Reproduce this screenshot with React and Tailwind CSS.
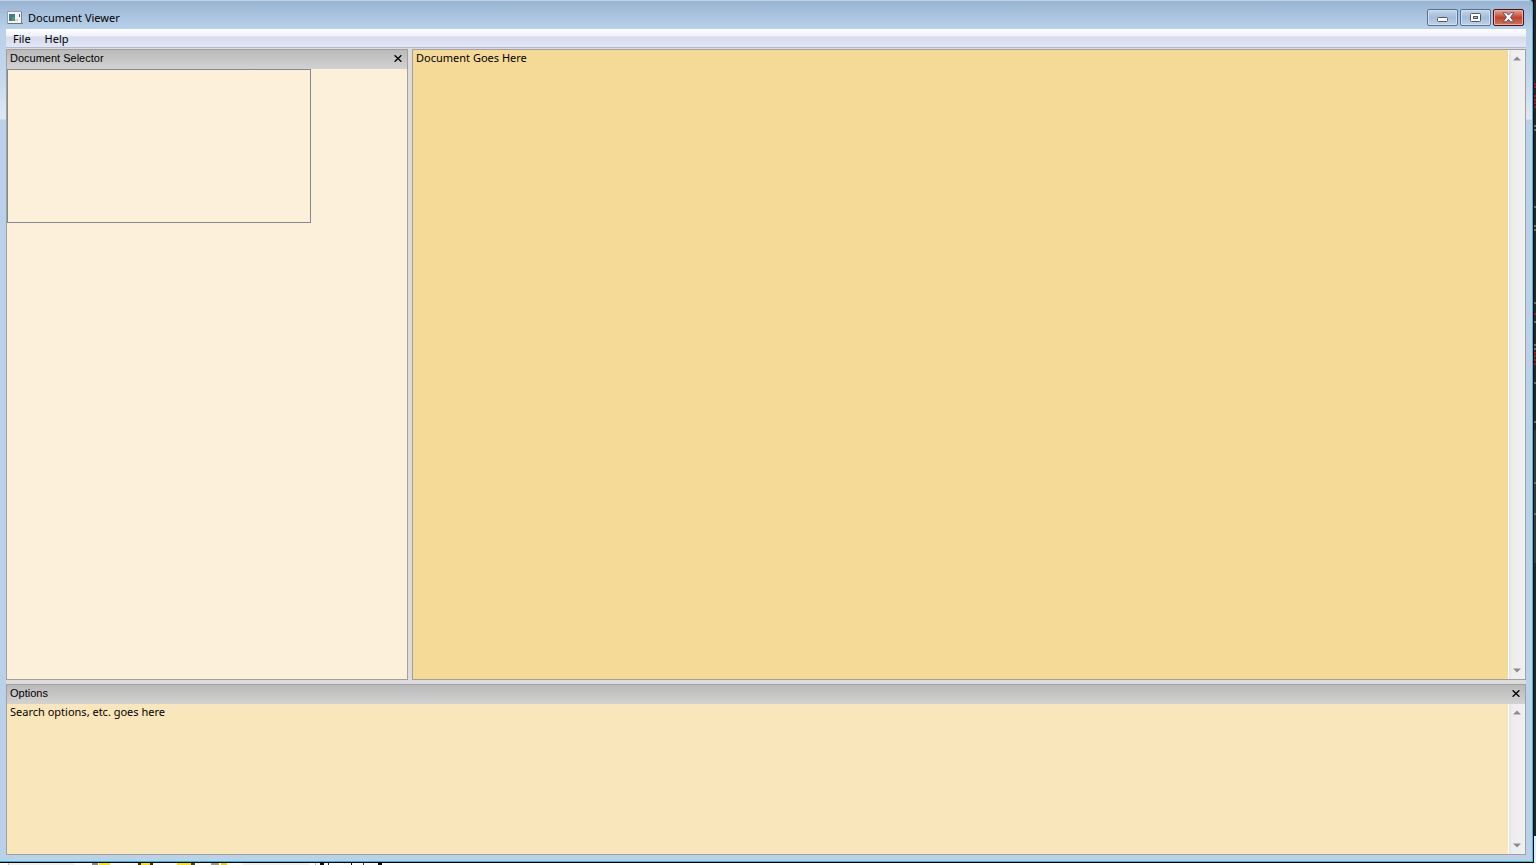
import { useState } from "react";

const uiFont = "font-['Noto_Sans',sans-serif]";
const dockFont = "font-['Liberation_Sans',sans-serif]";

// marks on the dark window behind, right edge
const redMarks = [83, 86, 95, 99, 102, 106, 313, 352, 355, 359, 363];
const tanMarks = [125, 129, 206, 225, 229, 302, 321, 344, 348, 382, 421, 482, 513];

// toolbar icon tops of the window behind, bottom edge
const toolbarBits = [
  { x: 8, w: 1, fill: "#c0c0c0" },
  { x: 9, w: 65, fill: "#f0f0f0" },
  { x: 92, w: 6, fill: "#8a8a8a" },
  { x: 99, w: 11, fill: "#ffe600" },
  { x: 138, w: 15, fill: "#3a3200" },
  { x: 141, w: 9, fill: "#ffe600" },
  { x: 177, w: 14, fill: "#ffe600" },
  { x: 191, w: 4, fill: "#504020" },
  { x: 211, w: 8, fill: "#a0a080" },
  { x: 221, w: 6, fill: "#ffd400" },
  { x: 243, w: 66, fill: "#f0f0f0" },
  { x: 315, w: 1, fill: "#c0c0c0" },
  { x: 320, w: 4, fill: "#111111" },
  { x: 328, w: 1, fill: "#1c3060" },
  { x: 351, w: 1, fill: "#111111" },
  { x: 363, w: 1, fill: "#602080" },
  { x: 378, w: 4, fill: "#111111" },
];

function AppIcon() {
  return (
    <svg width="16" height="14" viewBox="0 0 16 14" shapeRendering="crispEdges" aria-hidden="true">
      <rect x="0" y="0" width="15" height="13" fill="#9a9da1" />
      <rect x="1" y="1" width="13" height="11" fill="#f4f4f4" />
      <rect x="1" y="12" width="15" height="1" fill="#6f7378" />
      <rect x="14" y="1" width="1" height="12" fill="#7d8186" />
      <rect x="2" y="3" width="6" height="7" fill="#3c7f86" />
      <rect x="2" y="3" width="3" height="4" fill="#4c72a0" />
      <rect x="5" y="6" width="3" height="4" fill="#4d9a6e" />
      <rect x="8" y="8" width="3" height="2" fill="#cfd3d6" />
      <rect x="12" y="3" width="1" height="3" fill="#2c5f9c" />
    </svg>
  );
}

function CaptionButton({ label, danger, onClick, children }) {
  return (
    <button
      aria-label={label}
      onClick={onClick}
      className={`w-[31px] h-[17px] rounded-[2px] border flex items-center justify-center ${
        danger
          ? "border-[#43141c] bg-linear-to-b from-[#e3a596] from-0% via-[#c0432b] via-50% to-[#d5745c] shadow-[inset_0_0_0_1px_#e8b3a6]"
          : "border-[#58708f] bg-linear-to-b from-[#c4d7ec] from-0% via-[#a3bcd8] via-50% to-[#bdd2ea] shadow-[inset_0_0_0_1px_#cfdff1]"
      }`}
    >
      {children}
    </button>
  );
}

function TitleBar() {
  return (
    <div className="h-[29px] flex items-start justify-between pr-[2px]">
      <div className="flex items-center gap-[5px] pt-[9px] pl-[1px]">
        <AppIcon />
        <h1 className="text-[11px] leading-[18px] text-black">Document Viewer</h1>
      </div>
      <div className="flex gap-[2px] pt-[9px]">
        <CaptionButton label="Minimize">
          <svg width="11" height="11" viewBox="0 0 11 11">
            <rect x="0.5" y="5.5" width="10" height="4" rx="1" fill="#fff" stroke="#535666" />
          </svg>
        </CaptionButton>
        <CaptionButton label="Maximize">
          <svg width="11" height="9" viewBox="0 0 11 9">
            <rect x="0.5" y="0.5" width="10" height="8" rx="1" fill="#fff" stroke="#535666" />
            <rect x="3.5" y="3.5" width="4" height="2" fill="#a9c1dc" stroke="#535666" />
          </svg>
        </CaptionButton>
        <CaptionButton label="Close" danger>
          <svg width="13" height="11" viewBox="0 0 13 11">
            <path
              d="M1 .8H4.3L6.5 3.1 8.7.8H12L8.5 5.2 12 9.8H8.7L6.5 7.4 4.3 9.8H1L4.5 5.2Z"
              fill="#fff"
              stroke="#5b5569"
              strokeLinejoin="round"
            />
          </svg>
        </CaptionButton>
      </div>
    </div>
  );
}

function DockHeader({ title, onClose }) {
  return (
    <div className="h-[19px] shrink-0 flex items-start justify-between pl-[3px] pr-[5px] bg-linear-to-b from-[#bababa] to-[#d2d2d2]">
      <h2 className={`${dockFont} text-[11px] leading-4 text-black`}>{title}</h2>
      <button aria-label={`Close ${title}`} onClick={onClose} className="h-4 flex items-center">
        <svg width="8" height="7" viewBox="0 0 8 7">
          <path d="M.6 .3L7.4 6.7M7.4 .3L.6 6.7" stroke="#000" strokeWidth="1.4" />
        </svg>
      </button>
    </div>
  );
}

function ScrollBar() {
  return (
    <div className="w-[17px] shrink-0 flex flex-col justify-between items-center py-[6px] border-l border-white bg-linear-to-r from-[#e3e3e3] from-0% via-[#eeeeee] via-20% to-[#f0f0f0]">
      <button aria-label="Scroll up">
        <svg width="8" height="5" viewBox="0 0 8 5">
          <path d="M0 4.5L4 .5 8 4.5Z" fill="#8c8c8c" />
        </svg>
      </button>
      <button aria-label="Scroll down">
        <svg width="8" height="5" viewBox="0 0 8 5">
          <path d="M0 .5H8L4 4.5Z" fill="#8c8c8c" />
        </svg>
      </button>
    </div>
  );
}

function App() {
  const [showSelector, setShowSelector] = useState(true);
  const [showOptions, setShowOptions] = useState(true);

  return (
    <div className={`${uiFont} h-screen flex flex-col bg-white text-black overflow-hidden`}>
      <div className="flex-1 min-h-0 flex bg-[#262626]">
        {/* Window frame */}
        <div className="flex-1 min-w-0 flex border-r border-b border-black">
          <div className="flex-1 min-w-0 flex flex-col px-[6px] pb-[6px] border-r border-b border-r-[#22c8ee] border-b-[#35b5cf] rounded-tr-[4px] bg-[linear-gradient(to_bottom,#e8eff7_0px,#98b4d2_1px,#b9d1ea_29px,#c3d7ed_75px,#dfe9f5_119px,#bad1e9_120px)]">
            <TitleBar />

            <nav className="h-[19px] shrink-0 flex items-start border-b border-[#b5bacb] bg-[linear-gradient(to_bottom,#ffffff_0px,#eef0f8_7px,#d6dbed_8px,#e2e6f6_18px)] text-[11px] leading-5">
              <button className="px-[7px]">File</button>
              <button className="px-[7px]">Help</button>
            </nav>

            <main className="flex-1 min-h-0 flex flex-col gap-1 pt-px bg-[#dcdcdc]">
              <div className="flex-1 min-h-0 flex gap-1">
                {showSelector && (
                  <section className="w-[402px] shrink-0 flex flex-col border border-[#a0a0a0] bg-[#fcf0db]">
                    <DockHeader title="Document Selector" onClose={() => setShowSelector(false)} />
                    <ul
                      aria-label="Documents"
                      className="w-[304px] h-[154px] border border-[#828790]"
                    ></ul>
                  </section>
                )}
                <section className="flex-1 min-w-0 flex border border-[#a0a0a0] bg-[#f5da97]">
                  <p className="flex-1 pl-[3px] text-[11px] leading-4">Document Goes Here</p>
                  <ScrollBar />
                </section>
              </div>

              {showOptions && (
                <section className="h-[171px] shrink-0 flex flex-col border border-[#a0a0a0] bg-[#fae6bb]">
                  <DockHeader title="Options" onClose={() => setShowOptions(false)} />
                  <div className="flex-1 flex">
                    <p className="flex-1 pl-[3px] text-[11px] leading-4">
                      Search options, etc. goes here
                    </p>
                    <ScrollBar />
                  </div>
                </section>
              )}
            </main>
          </div>
        </div>

        <svg className="w-[2px] h-full shrink-0" shapeRendering="crispEdges" aria-hidden="true">
          <rect y="430" width="2" height="133" fill="#3a3a3a" />
          <rect y="836" width="2" height="30" fill="#e4edf6" />
          {redMarks.map((y) => (
            <rect key={y} y={y} width="2" height="2" fill="#b3161b" />
          ))}
          {tanMarks.map((y) => (
            <rect key={y} y={y} width="2" height="2" fill="#7a6f50" />
          ))}
        </svg>
      </div>

      <svg className="w-full h-[2px] shrink-0" shapeRendering="crispEdges" aria-hidden="true">
        {toolbarBits.map((bit) => (
          <rect key={bit.x} x={bit.x} width={bit.w} height="2" fill={bit.fill} />
        ))}
      </svg>
    </div>
  );
}

export default App;
